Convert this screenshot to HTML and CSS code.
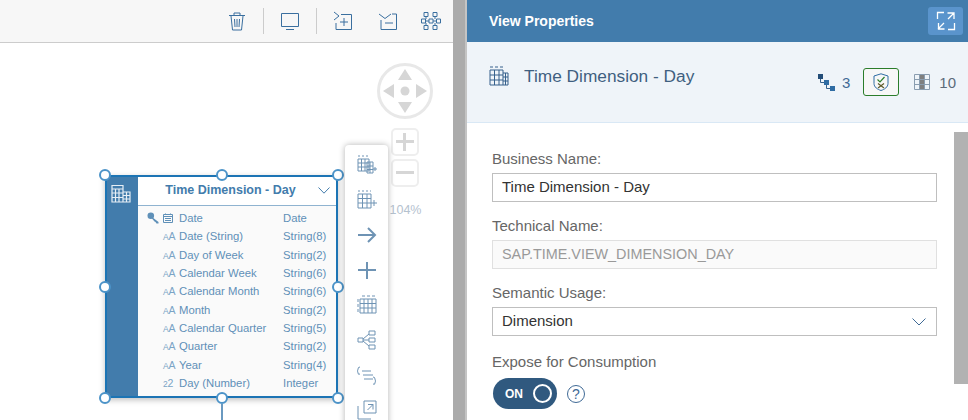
FILE: index.html
```html
<!DOCTYPE html>
<html lang="en">
<head>
  <meta charset="UTF-8">
  <title>View Properties</title>
  <link rel="stylesheet" href="styles.css">
</head>
<body>

<div class="app">

  <div class="canvas-pane">
    <div class="toolbar">
      <svg class="tool-icon" viewBox="0 0 20 20"><path d="M2 4.5h16M7 4V2h6v2M4 5l1.5 14h9L16 5M7.5 8l.5 8M10 8v8M12.5 8l-.5 8"/></svg>
      <span class="tool-sep"></span>
      <svg class="tool-icon" viewBox="0 0 20 20"><path d="M1.5 2.5h17v13h-17zM6 18.5h8"/></svg>
      <span class="tool-sep"></span>
      <svg class="tool-icon" viewBox="0 0 20 20"><path d="M1 1l5 4-5 4M8 3.5h10.5v15H3V12M7 11h8M11 7v8"/></svg>
      <svg class="tool-icon collapse" viewBox="0 0 20 20"><path d="M1 3l6 4.5L13 3M14 3h4.5v15.5H3V9M7 12h8"/></svg>
      <svg class="tool-icon layout" viewBox="0 0 20 20"><path d="M3 1.5h4v4H3zM12 1.5h4v4h-4zM.5 8h4v4h-4zM8 8h4v4H8zM15.5 8h4v4h-4zM3 14.5h4v4H3zM12 14.5h4v4h-4zM4.5 10H8M12 10h3.5M5 5.5V8M14 5.5V8M5 12v2.5M14 12v2.5"/></svg>
    </div>

    <div class="nav-pad">
      <svg viewBox="0 0 56 56" width="56" height="56">
        <circle cx="28" cy="28" r="26.5" fill="#fff" stroke="#e8e8e8" stroke-width="3"/>
        <path class="nav-arrow" d="M28 6l7 11H21zM28 50l-7-11h14zM6 28l11-7v14zM50 28l-11 7V21z"/>
        <circle class="nav-arrow" cx="28" cy="28" r="4.5"/>
      </svg>
    </div>
    <div class="zoom-btns">
      <div class="zoom-btn"><span class="zoom-h"></span><span class="zoom-v"></span></div>
      <div class="zoom-btn"><span class="zoom-h"></span></div>
      <div class="zoom-level">104%</div>
    </div>

    <div class="node">
      <div class="node-strip">
        <svg class="strip-icon" viewBox="0 0 20 20"><path d="M1 5V1.5h11V5M1 5h11v13H1zM1 9h11M1 13.5h11M4.5 5v13M8 5v13M12 8h7v10h-7M12 11.5h7M12 15h7M15.5 8v10"/></svg>
      </div>
      <div class="node-main">
        <div class="node-head">
          <span class="node-title">Time Dimension - Day</span>
          <svg class="node-chevron" viewBox="0 0 12 7"><path d="M.5.5L6 6.2 11.5.5"/></svg>
        </div>
        <div class="node-rows">
          <div class="row">
            <svg class="key-icon" viewBox="0 0 12 12"><circle cx="3.8" cy="3.8" r="3.3"/><path d="M5 5l6.5 5v1.5H9.5L8.5 10 7.5 9.5 4.5 6z"/></svg>
            <svg class="cal-icon" viewBox="0 0 10 10"><path d="M.5 1.5h9v8h-9zM.5 3.5h9M2.5.5v1.5M7.5.5v1.5M2 5.5h6M2 7.5h6"/></svg>
            <span>Date</span><span>Date</span>
          </div>
          <div class="row"><span></span><span class="aa"><small>A</small>A</span><span>Date (String)</span><span>String(8)</span></div>
          <div class="row"><span></span><span class="aa"><small>A</small>A</span><span>Day of Week</span><span>String(2)</span></div>
          <div class="row"><span></span><span class="aa"><small>A</small>A</span><span>Calendar Week</span><span>String(6)</span></div>
          <div class="row"><span></span><span class="aa"><small>A</small>A</span><span>Calendar Month</span><span>String(6)</span></div>
          <div class="row"><span></span><span class="aa"><small>A</small>A</span><span>Month</span><span>String(2)</span></div>
          <div class="row"><span></span><span class="aa"><small>A</small>A</span><span>Calendar Quarter</span><span>String(5)</span></div>
          <div class="row"><span></span><span class="aa"><small>A</small>A</span><span>Quarter</span><span>String(2)</span></div>
          <div class="row"><span></span><span class="aa"><small>A</small>A</span><span>Year</span><span>String(4)</span></div>
          <div class="row"><span></span><span class="aa"><small>2</small>2</span><span>Day (Number)</span><span>Integer</span></div>
        </div>
      </div>
      <span class="handle h-tl"></span>
      <span class="handle h-tc"></span>
      <span class="handle h-tr"></span>
      <span class="handle h-ml"></span>
      <span class="handle h-mr"></span>
      <span class="handle h-bl"></span>
      <span class="handle h-bc"></span>
      <span class="handle h-br"></span>
    </div>
    <div class="link-line"></div>

    <div class="popover">
      <svg class="pop-icon thin" viewBox="0 0 20 20"><path d="M1 1h2M5 1h2M9 1h2M1 4h11v12H1zM1 8h11M1 12h11M4.5 4v12M8 4v12M10 7h6v11h-6zM10 11h6M10 14.5h6M13 7v11M16 14h4M18 12v4"/></svg>
      <svg class="pop-icon thin" viewBox="0 0 20 20"><path d="M1 1h2M5 1h2M9 1h2M13 1h1M1 4h13v14H1zM1 8.5h13M1 13h13M5.5 4v14M10 4v14M14 13h6M17 10v6"/></svg>
      <svg class="pop-icon" viewBox="0 0 20 20"><path d="M1 10h17M11 3l7 7-7 7"/></svg>
      <svg class="pop-icon" viewBox="0 0 20 20"><path d="M1 10h18M10 2v17"/></svg>
      <svg class="pop-icon thin" viewBox="0 0 20 20"><path d="M5 1h3M10 1h3M15 1h3M3 4h16v14H3zM3 8.5h16M3 13h16M7 4v14M11 4v14M15 4v14M1 4v3M1 9v3M1 14v3"/></svg>
      <svg class="pop-icon thin" viewBox="0 0 20 20"><path d="M1 8h5v4H1zM12 1h6v4h-6zM12 8h6v4h-6zM12 15h6v4h-6zM6 9l6-5M6 10h6M6 11l6 5"/></svg>
      <svg class="pop-icon thin" viewBox="0 0 20 20"><path d="M3 2Q1 2 1 4T0 6q1 0 1 2t2 1M5 6h9M6 10h10M7 14h9M16 12q2 0 2 2t1 2q-1 0-1 2t-2 1"/></svg>
      <svg class="pop-icon thin" viewBox="0 0 20 20"><path d="M7 1h12v12H7zM1 6v13h13M10.5 10L16 4.5M11 4.5h5v5"/></svg>
    </div>
  </div>

  <div class="splitter"></div>

  <div class="panel">
    <div class="panel-bar">
      <span class="panel-name">View Properties</span>
      <span class="expand-btn">
        <svg viewBox="0 0 20 20" width="20" height="20"><path d="M8 1.5H1.5V8M12 18.5h6.5V12M2 18l6-6M2.5 12v6h6M18 2l-6 6M11.5 2H18v6"/></svg>
      </span>
    </div>

    <div class="panel-sub">
      <svg class="sub-icon" viewBox="0 0 20 20"><path d="M1 1h3M6 1h3M11 1h3M1 4h13v15H1zM1 9h13M1 14h13M5.5 4v15M10 4v15M14 7h5v12h-5M14 11h5M14 15h5M16.5 7v12"/></svg>
      <span class="sub-title">Time Dimension - Day</span>
      <div class="sub-stats">
        <svg class="stat-icon" viewBox="0 0 17 17"><path class="tree-line" d="M2.5 5v3.5H6M8.5 11v3.5H12"/><rect class="tree-a" x="0" y="0" width="5" height="5"/><rect class="tree-b" x="6" y="6" width="5" height="5"/><rect class="tree-b" x="12" y="12" width="5" height="5"/></svg>
        <span class="stat-num">3</span>
        <span class="shield-btn">
          <svg viewBox="0 0 16 18" width="16" height="18"><path class="shield-outer" d="M8 .8L15 3v7.5C15 14 11.5 16.5 8 17.5 4.5 16.5 1 14 1 10.5V3z"/><path class="shield-ok" d="M4.5 6.5L7 9l4.5-5"/><path class="shield-x" d="M5 10.5l6 4.5M11 10.5l-6 4.5"/></svg>
        </span>
        <svg class="stat-icon cols" viewBox="0 0 16 16"><rect x="5.5" y="0" width="5" height="16" fill="#7f7f7f" stroke="none"/><path d="M.5.5h15v15H.5zM.5 5.5h15M.5 10.5h15M5.5.5v15M10.5.5v15"/></svg>
        <span class="stat-num muted">10</span>
      </div>
    </div>

    <div class="panel-body">
      <div class="form">
        <div class="field">
          <label class="field-label">Business Name:</label>
          <div class="field-box">Time Dimension - Day</div>
        </div>
        <div class="field">
          <label class="field-label">Technical Name:</label>
          <div class="field-box readonly">SAP.TIME.VIEW_DIMENSION_DAY</div>
        </div>
        <div class="field">
          <label class="field-label">Semantic Usage:</label>
          <div class="field-box select">
            Dimension
            <svg class="select-chevron" viewBox="0 0 14 8"><path d="M.5.5L7 7l6.5-6.5"/></svg>
          </div>
        </div>
        <div class="expose">
          <label class="field-label">Expose for Consumption</label>
          <div class="toggle-row">
            <div class="toggle"><span>ON</span><i class="toggle-knob"></i></div>
            <span class="help">?</span>
          </div>
        </div>
      </div>
      <div class="scrollbar"></div>
    </div>
  </div>

</div>

</body>
</html>
```

FILE: styles.css
```css
body {
  margin: 0;
  font-family: "Liberation Sans", Arial, sans-serif;
  background: #fff;
  overflow: hidden;
}
.app {
  display: flex;
  width: 968px;
  height: 420px;
  overflow: hidden;
}

/* left side */
.canvas-pane {
  position: relative;
  width: 453px;
  overflow: hidden;
  background: #fff;
}
.toolbar {
  display: flex;
  align-items: center;
  justify-content: flex-end;
  height: 43px;
  padding-right: 12px;
  box-sizing: border-box;
  background: #f7f7f7;
  border-bottom: 1px solid #ccc;
  gap: 16px;
}
.tool-icon {
  width: 20px;
  height: 20px;
  fill: none;
  stroke: #3a6f9f;
  stroke-width: 1;
}
.tool-icon.collapse {
  margin-left: 9px;
}
.tool-icon.layout {
  margin-left: 7px;
}
.tool-sep {
  width: 1px;
  height: 26px;
  background: #ccc;
}
.nav-pad {
  position: absolute;
  left: 377px;
  top: 63px;
  width: 56px;
  height: 56px;
}
.nav-arrow {
  fill: #d6d6d6;
}
.zoom-btns {
  position: absolute;
  left: 389px;
  top: 128px;
  width: 33px;
  display: flex;
  flex-direction: column;
  align-items: center;
  gap: 3px;
}
.zoom-btn {
  position: relative;
  width: 24px;
  height: 24px;
  margin-left: -2px;
  border: 2px solid #eee;
  border-radius: 5px;
  background: #fff;
}
.zoom-h {
  position: absolute;
  left: 3px;
  right: 3px;
  top: 10px;
  height: 3px;
  background: #d6d6d6;
}
.zoom-v {
  position: absolute;
  top: 3px;
  bottom: 3px;
  left: 10px;
  width: 3px;
  background: #d6d6d6;
}
.zoom-level {
  margin-top: 13px;
  font-size: 12.5px;
  color: #b5c2cf;
}

/* table node */
.node {
  position: absolute;
  left: 105px;
  top: 175px;
  width: 233px;
  height: 223px;
  box-sizing: border-box;
  display: flex;
  border: 2px solid #1c74b4;
  background: #fafafa;
  box-shadow: 0 2px 6px rgba(0,0,0,0.25);
}
.node-strip {
  width: 31px;
  flex: none;
  background: #427cac;
}
.strip-icon {
  display: block;
  width: 20px;
  height: 20px;
  margin: 7px 0 0 4px;
  fill: none;
  stroke: #e6eef5;
  stroke-width: 1.2;
}
.node-main {
  flex: 1;
  min-width: 0;
}
.node-head {
  position: relative;
  height: 28px;
  display: flex;
  align-items: center;
  justify-content: center;
  border-bottom: 1px solid #8fb3d0;
  background: #fff;
}
.node-title {
  margin: 0 13px 2px 0;
  font-size: 12.5px;
  font-weight: bold;
  color: #427cac;
}
.node-chevron {
  position: absolute;
  right: 6px;
  top: 10px;
  width: 12px;
  height: 7px;
  fill: none;
  stroke: #427cac;
}
.node-rows {
  padding: 3px 0 0 9px;
}
.row {
  display: grid;
  grid-template-columns: 16px 16px 104px 1fr;
  align-items: center;
  height: 18.3px;
  font-size: 11.3px;
  color: #5f90b8;
}
.key-icon {
  width: 12px;
  height: 12px;
  fill: #5f90b8;
}
.cal-icon {
  width: 10px;
  height: 10px;
  fill: none;
  stroke: #5f90b8;
  stroke-width: 1;
}
.aa {
  font-size: 10.5px;
  letter-spacing: -0.2px;
  color: #7ba4c6;
}
.aa small {
  font-size: 8.5px;
}
.handle {
  position: absolute;
  width: 8px;
  height: 8px;
  border: 2px solid #4c93c8;
  border-radius: 50%;
  background: #fff;
}
.h-tl { left: -8px; top: -8px; }
.h-tc { left: 109px; top: -8px; }
.h-tr { right: -8px; top: -8px; }
.h-ml { left: -8px; top: 104px; }
.h-mr { right: -8px; top: 104px; }
.h-bl { left: -8px; bottom: -8px; }
.h-bc { left: 109px; bottom: -8px; }
.h-br { right: -8px; bottom: -8px; }
.link-line {
  position: absolute;
  left: 221px;
  top: 404px;
  width: 2px;
  height: 16px;
  background: #6a99c0;
}
.popover {
  position: absolute;
  left: 345px;
  top: 145px;
  width: 43px;
  height: 290px;
  box-sizing: border-box;
  padding-top: 10px;
  display: flex;
  flex-direction: column;
  align-items: center;
  gap: 15px;
  background: #fff;
  border-radius: 4px;
  box-shadow: 0 0 6px rgba(0,0,0,0.3);
}
.pop-icon {
  flex: none;
  width: 20px;
  height: 20px;
  fill: none;
  stroke: #6e93b4;
  stroke-width: 2;
}
.pop-icon.thin {
  stroke-width: 1;
}

/* splitter */
.splitter {
  flex: none;
  width: 14px;
  box-sizing: border-box;
  background: #ababab;
  border-right: 2px solid #c4c4c4;
}

/* right side */
.panel {
  flex: 1;
  min-width: 0;
  display: flex;
  flex-direction: column;
}
.panel-bar {
  display: flex;
  align-items: center;
  justify-content: space-between;
  height: 42px;
  padding: 0 5px 0 22px;
  flex: none;
  background: #427cac;
}
.panel-name {
  font-size: 14px;
  font-weight: bold;
  color: #fff;
}
.expand-btn {
  display: flex;
  align-items: center;
  justify-content: center;
  width: 35px;
  height: 28px;
  background: #5a94cc;
  border-radius: 3px;
}
.expand-btn svg {
  fill: none;
  stroke: #fff;
  stroke-width: 1.3;
}
.panel-sub {
  position: relative;
  flex: none;
  display: flex;
  align-items: flex-start;
  height: 81px;
  box-sizing: border-box;
  padding: 24px 12px 0 22px;
  background: #eff4f9;
  border-bottom: 1px solid #d9e8f5;
}
.sub-icon {
  flex: none;
  width: 20px;
  height: 20px;
  fill: none;
  stroke: #36618c;
  stroke-width: 1;
}
.sub-title {
  margin-left: 15px;
  font-size: 17.3px;
  line-height: 20px;
  color: #3f5f80;
}
.sub-stats {
  margin-left: auto;
  margin-top: 2px;
  display: flex;
  align-items: center;
  height: 28px;
}
.stat-icon {
  width: 17px;
  height: 17px;
  margin-right: 7px;
}
.stat-icon.cols {
  width: 16px;
  height: 16px;
  margin: 0 9px 0 15px;
  fill: none;
  stroke: #8a9db0;
  stroke-width: 1;
}
.tree-line {
  fill: none;
  stroke: #36618c;
}
.tree-a {
  fill: #234d78;
}
.tree-b {
  fill: #2f6ca3;
}
.stat-num {
  font-size: 15px;
  color: #3f6a96;
}
.stat-num.muted {
  color: #5c6b7a;
}
.shield-btn {
  display: flex;
  align-items: center;
  justify-content: center;
  width: 34px;
  height: 26px;
  margin-left: 13px;
  background: #f7f7f7;
  border: 1px solid #2b7d2b;
  border-radius: 3px;
}
.shield-outer {
  fill: none;
  stroke: #2f6ca3;
}
.shield-ok {
  fill: none;
  stroke: #2b7d2b;
  stroke-width: 1.2;
}
.shield-x {
  fill: none;
  stroke: #5d5a2a;
  stroke-width: 1.2;
}
.panel-body {
  position: relative;
  flex: 1;
  min-height: 0;
  overflow: hidden;
}
.form {
  width: 445px;
  padding: 26px 0 0 25px;
}
.field {
  margin-bottom: 14px;
}
.field-label {
  display: block;
  height: 20px;
  margin-bottom: 4px;
  font-size: 15px;
  line-height: 20px;
  color: #666;
}
.field-box {
  position: relative;
  height: 29px;
  box-sizing: border-box;
  padding: 0 9px;
  font-size: 15px;
  line-height: 26px;
  color: #333;
  background: #fff;
  border: 1px solid #bfbfbf;
}
.field-box.readonly {
  font-size: 14.4px;
  line-height: 27px;
  color: #999;
  background: #fafafa;
  border-color: #e0e0e0;
}
.select-chevron {
  position: absolute;
  right: 10px;
  top: 10px;
  width: 14px;
  height: 8px;
  fill: none;
  stroke: #3f6a96;
}
.expose {
  margin-top: 16px;
}
.expose .field-label {
  margin-bottom: 6px;
}
.toggle-row {
  display: flex;
  align-items: center;
  gap: 10px;
  padding-left: 1px;
}
.toggle {
  display: flex;
  align-items: center;
  justify-content: space-between;
  width: 64px;
  height: 31px;
  box-sizing: border-box;
  padding: 0 5px 0 12px;
  background: #30597f;
  border-radius: 16px;
  font-size: 12px;
  font-weight: bold;
  color: #fff;
}
.toggle-knob {
  width: 15px;
  height: 15px;
  border: 2px solid #fff;
  border-radius: 50%;
}
.help {
  display: flex;
  align-items: center;
  justify-content: center;
  width: 16px;
  height: 16px;
  border: 1px solid #3f6a96;
  border-radius: 50%;
  font-size: 14px;
  color: #3f6a96;
}
.scrollbar {
  position: absolute;
  right: 0;
  top: 9px;
  width: 14px;
  height: 252px;
  background: #b2b2b2;
}
```
